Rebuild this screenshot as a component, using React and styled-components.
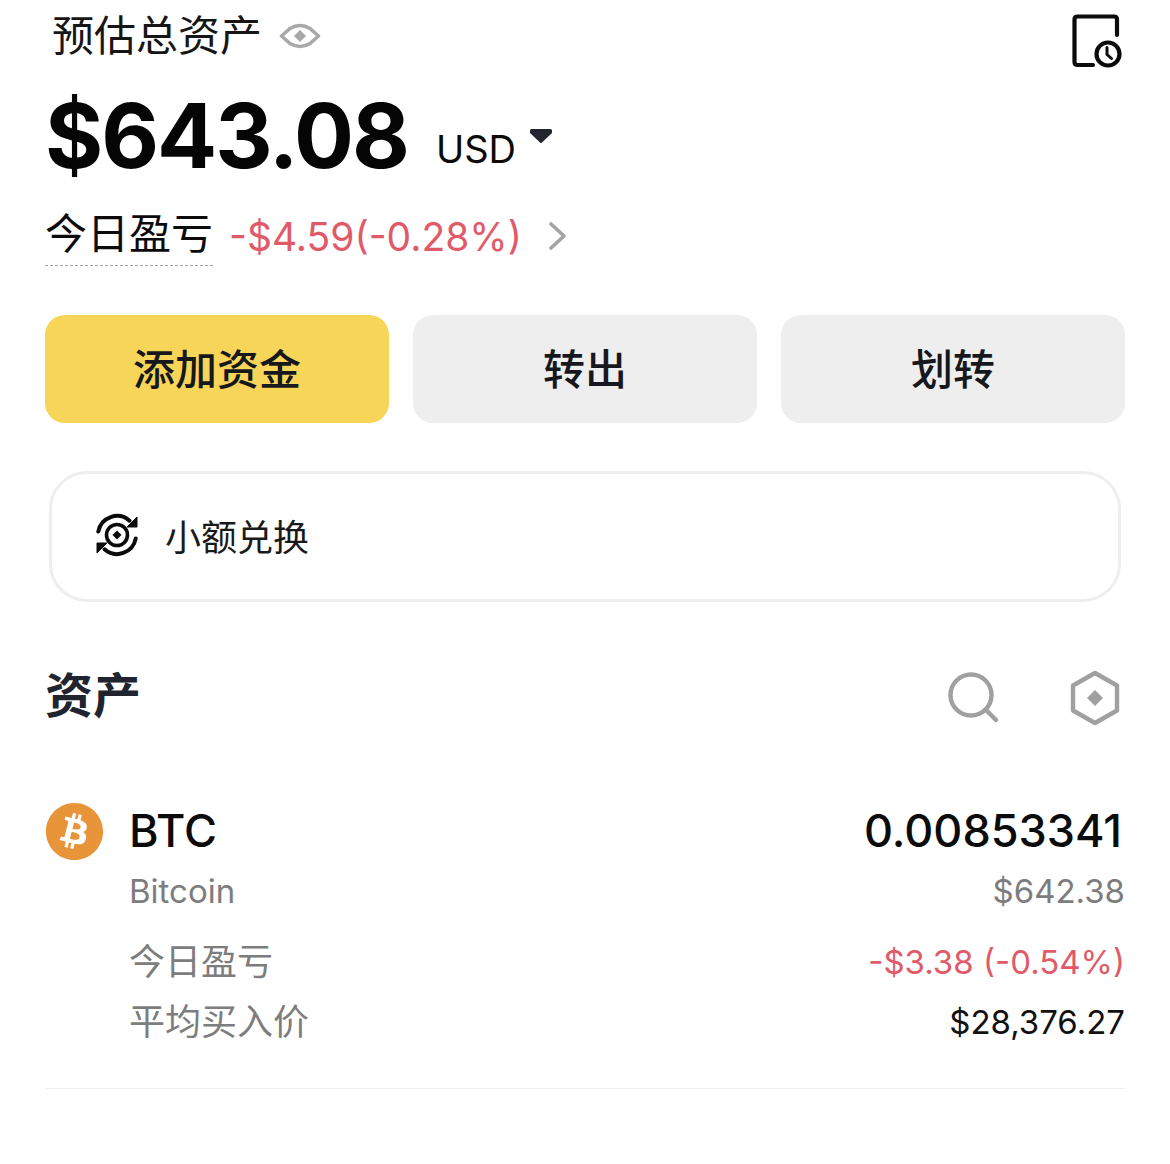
import React from 'react';
import styled, { createGlobalStyle } from 'styled-components';
import { FaBitcoin } from 'react-icons/fa';

const GlobalStyle = createGlobalStyle`
  html, body {
    margin: 0;
    padding: 0;
    background: #fff;
  }
  body {
    font-family: Inter, "Noto Sans CJK SC", sans-serif;
    color: #0b0b0b;
  }
`;

const EyeIcon = () => (
  <svg width="42" height="30" viewBox="0 0 42 30" fill="none">
    <path d="M2.500 15L11 7.500Q21 1.500 31 7.500L39.500 15L31 22.500Q21 28.500 11 22.500Z" stroke="#a8a8a8" strokeWidth="3.600" strokeLinejoin="round" />
    <path d="M21 9l6 6-6 6-6-6Z" fill="#a8a8a8" />
  </svg>
);

const HistoryIcon = () => (
  <svg width="50" height="54" viewBox="0 0 50 54" fill="none">
    <path d="M21 51H5.500Q2.500 51 2.500 48V5.500Q2.500 2.500 5.500 2.500H42Q45 2.500 45 5.500V21" stroke="#0b0b0b" strokeWidth="4.200" strokeLinecap="round" />
    <circle cx="36" cy="40" r="11.500" stroke="#0b0b0b" strokeWidth="4.200" />
    <path d="M35 33.500V40.500L39.500 44.500" stroke="#0b0b0b" strokeWidth="3" strokeLinecap="round" strokeLinejoin="round" />
  </svg>
);

const Caret = () => (
  <svg width="22" height="16" viewBox="0 0 22 16">
    <path d="M1.500 1H20.500Q22 1 22 2.500V5L12 14.500Q11 15.500 10 14.500L0 5V2.500Q0 1 1.500 1Z" fill="#22252e" />
  </svg>
);

const Chevron = () => (
  <svg width="20" height="30" viewBox="0 0 20 30" fill="none">
    <path d="M3 3L16 15L3 27" stroke="#a3a3a3" strokeWidth="3.600" strokeLinecap="round" strokeLinejoin="round" />
  </svg>
);

const SwapIcon = () => (
  <svg width="42" height="44" viewBox="0 0 42 44" fill="none">
    <path d="M2.300 18.500A19 19 0 0 1 33.500 7.700" stroke="#0b0b0b" strokeWidth="4" strokeLinecap="round" />
    <path d="M41 4V14H31Z" fill="#0b0b0b" stroke="#0b0b0b" strokeLinejoin="round" />
    <path d="M39.700 25.500A19 19 0 0 1 8.500 36.300" stroke="#0b0b0b" strokeWidth="4" strokeLinecap="round" />
    <path d="M1 40V30H11Z" fill="#0b0b0b" stroke="#0b0b0b" strokeLinejoin="round" />
    <circle cx="21" cy="22" r="10.500" stroke="#0b0b0b" strokeWidth="3.600" />
    <path d="M21 17.500l4.500 4.500-4.500 4.500-4.500-4.500Z" fill="#0b0b0b" />
  </svg>
);

const SearchIcon = () => (
  <svg width="52" height="52" viewBox="0 0 52 52" fill="none">
    <circle cx="23" cy="23" r="20.500" stroke="#a0a0a0" strokeWidth="4.400" />
    <path d="M38 38L48 48" stroke="#a0a0a0" strokeWidth="4.400" strokeLinecap="round" />
  </svg>
);

const HexIcon = () => (
  <svg width="50" height="56" viewBox="0 0 50 56" fill="none">
    <path d="M25 3L47 15.500V40.500L25 53L3 40.500V15.500Z" stroke="#a0a0a0" strokeWidth="4.400" strokeLinejoin="round" />
    <path d="M25 20l8 8-8 8-8-8Z" fill="#a0a0a0" />
  </svg>
);

export default function App() {
  return (
    <Page>
      <GlobalStyle />
      <TopRow>
        <TitleGroup>
          <Title>预估总资产</Title>
          <EyeIcon />
        </TitleGroup>
        <HistoryIcon />
      </TopRow>

      <BalanceRow>
        <Balance>$643.08</Balance>
        <Currency>USD</Currency>
        <Caret />
      </BalanceRow>

      <PnlRow>
        <PnlLabel>今日盈亏</PnlLabel>
        <PnlValue>-$4.59(-0.28%)</PnlValue>
        <Chevron />
      </PnlRow>

      <Buttons>
        <ActionButton $primary>添加资金</ActionButton>
        <ActionButton>转出</ActionButton>
        <ActionButton>划转</ActionButton>
      </Buttons>

      <ConvertCard>
        <SwapIcon />
        <ConvertText>小额兑换</ConvertText>
      </ConvertCard>

      <SectionHeader>
        <SectionTitle>资产</SectionTitle>
        <SectionIcons>
          <SearchIcon />
          <HexIcon />
        </SectionIcons>
      </SectionHeader>

      <Asset>
        <AssetHead>
          <CoinIcon>
            <FaBitcoin size={59} color="#e8953a" />
          </CoinIcon>
          <AssetBody>
            <AssetLine>
              <Symbol>BTC</Symbol>
              <Amount>0.00853341</Amount>
            </AssetLine>
            <AssetLine>
              <CoinName>Bitcoin</CoinName>
              <Fiat>$642.38</Fiat>
            </AssetLine>
            <Stats>
              <AssetLine>
                <StatLabel>今日盈亏</StatLabel>
                <StatValue $loss>-$3.38 (-0.54%)</StatValue>
              </AssetLine>
              <AssetLine>
                <StatLabel>平均买入价</StatLabel>
                <StatValue>$28,376.27</StatValue>
              </AssetLine>
            </Stats>
          </AssetBody>
        </AssetHead>
      </Asset>
    </Page>
  );
}

const Page = styled.div`
  width: 1170px;
  height: 1164px;
  box-sizing: border-box;
  padding: 13px 45px 0;
  background: #fff;
  overflow: hidden;
`;

const TopRow = styled.div`
  display: flex;
  justify-content: space-between;
  align-items: flex-start;
  padding-right: 3px;
  padding-top: 1px;
  height: 53px;
`;

const TitleGroup = styled.div`
  display: flex;
  align-items: center;
  gap: 17px;
  padding-left: 7px;
`;

const Title = styled.div`
  font-size: 42px;
  line-height: 44px;
  color: #161616;
`;

const BalanceRow = styled.div`
  display: flex;
  align-items: center;
  margin-top: 19px;
`;

const Balance = styled.div`
  font-size: 89px;
  line-height: 100px;
  font-weight: 700;
  letter-spacing: -2px;
  color: #050505;
`;

const Currency = styled.div`
  font-size: 38px;
  line-height: 48px;
  margin: 26px 14px 0 28px;
`;

const PnlRow = styled.div`
  display: flex;
  align-items: center;
  margin-top: 20px;
`;

const PnlLabel = styled.div`
  font-size: 42px;
  line-height: 56px;
  padding-bottom: 3px;
  border-bottom: 1.500px dashed #a5a5a5;
`;

const PnlValue = styled.div`
  font-size: 39px;
  color: #e05a6a;
  margin: 0 26px 0 16px;
`;

const Buttons = styled.div`
  display: grid;
  grid-template-columns: repeat(3, 344px);
  gap: 24px;
  margin-top: 49px;
`;

const ActionButton = styled.div`
  height: 108px;
  padding-bottom: 6px;
  box-sizing: border-box;
  border-radius: 20px;
  display: flex;
  align-items: center;
  justify-content: center;
  font-size: 42px;
  font-weight: 500;
  background: ${(p) => (p.$primary ? '#f6d558' : '#eeeeee')};
  color: #16181d;
`;

const ConvertCard = styled.div`
  margin: 48px 4px 0;
  height: 131px;
  box-sizing: border-box;
  border: 3px solid #eeeeee;
  border-radius: 38px;
  display: flex;
  align-items: center;
  gap: 27px;
  padding: 0 0 4px 44px;
`;

const ConvertText = styled.div`
  font-size: 36px;
  color: #1a1a1a;
`;

const SectionHeader = styled.div`
  display: flex;
  justify-content: space-between;
  align-items: center;
  margin-top: 64px;
  padding-right: 5px;
`;

const SectionTitle = styled.div`
  font-size: 48px;
  line-height: 60px;
  font-weight: 700;
  margin-bottom: 4px;
  color: #20242e;
`;

const SectionIcons = styled.div`
  display: flex;
  align-items: center;
  gap: 70px;
`;

const Asset = styled.div`
  margin-top: 72px;
  padding-bottom: 42px;
  border-bottom: 1.500px solid #eeeeee;
`;

const AssetHead = styled.div`
  display: flex;
  gap: 25px;
`;

const CoinIcon = styled.div`
  height: 59px;
  line-height: 0;
`;

const AssetBody = styled.div`
  flex: 1;
`;

const AssetLine = styled.div`
  display: flex;
  justify-content: space-between;
  align-items: center;
`;

const Symbol = styled.div`
  font-size: 45px;
  line-height: 58px;
  font-weight: 500;
`;

const Amount = styled.div`
  font-size: 45px;
  line-height: 58px;
  font-weight: 500;
  padding-right: 3px;
`;

const CoinName = styled.div`
  font-size: 33px;
  line-height: 62px;
  color: #7d7d7d;
`;

const Fiat = styled.div`
  font-size: 33px;
  line-height: 62px;
  color: #7d7d7d;
`;

const Stats = styled.div`
  display: flex;
  flex-direction: column;
  gap: 12px;
  margin-top: 16px;
`;

const StatLabel = styled.div`
  font-size: 36px;
  line-height: 48px;
  color: #7d7d7d;
`;

const StatValue = styled.div`
  font-size: 33px;
  line-height: 48px;
  color: ${(p) => (p.$loss ? '#e05a6a' : '#111')};
`;
